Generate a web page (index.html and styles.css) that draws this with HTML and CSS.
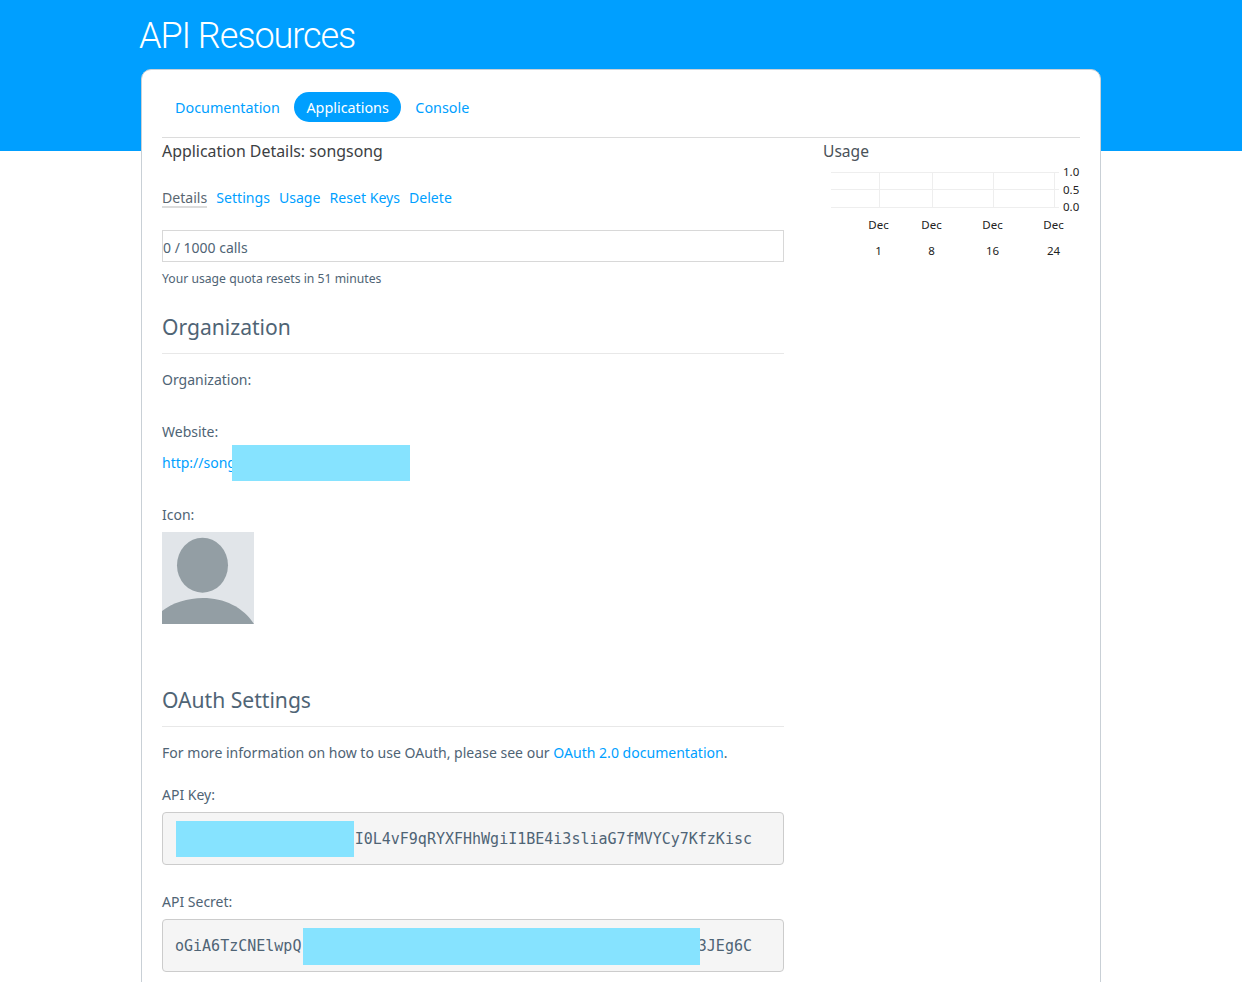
FILE: index.html
```html
<!DOCTYPE html>
<html lang="en">
<head>
<meta charset="utf-8">
<title>API Resources</title>
<link rel="stylesheet" href="styles.css">
</head>
<body>
<div class="page">
  <header class="hero">
    <h1 class="hero-title">API Resources</h1>
  </header>
  <main class="card">
    <nav class="main-nav">
      <a class="main-link" href="#">Documentation</a>
      <a class="main-link active" href="#">Applications</a>
      <a class="main-link" href="#">Console</a>
    </nav>
    <div class="columns">
      <section class="left">
        <h2 class="app-title">Application Details: songsong</h2>
        <nav class="tabs">
          <a class="tab current" href="#">Details</a>
          <a class="tab" href="#">Settings</a>
          <a class="tab" href="#">Usage</a>
          <a class="tab" href="#">Reset Keys</a>
          <a class="tab" href="#">Delete</a>
        </nav>
        <div class="progress">0 / 1000 calls</div>
        <p class="quota">Your usage quota resets in 51 minutes</p>

        <h3 class="section-title org-title">Organization</h3>
        <p class="field-label org-label">Organization:</p>
        <p class="field-label website-label">Website:</p>
        <div class="website-row">
          <a class="link" href="#">http://song</a>
          <span class="redact redact-site"></span>
        </div>
        <p class="field-label icon-label">Icon:</p>
        <svg class="avatar" width="92" height="92" viewBox="0 0 92 92" aria-label="Icon">
          <rect width="92" height="92" fill="#e1e5e9"/>
          <ellipse cx="40.5" cy="33.2" rx="25.5" ry="27.5" fill="#939ea4"/>
          <path d="M0 79 C10 71 26 66 41 66 C62 66 81 75 92 92 L0 92 Z" fill="#939ea4"/>
        </svg>

        <h3 class="section-title oauth-title">OAuth Settings</h3>
        <p class="oauth-note">For more information on how to use OAuth, please see our <a class="link" href="#">OAuth 2.0 documentation</a>.</p>
        <p class="field-label key-label">API Key:</p>
        <div class="code-box code-key">
          <code class="code-text">I0L4vF9qRYXFHhWgiI1BE4i3sliaG7fMVYCy7KfzKisc</code>
          <span class="redact redact-key"></span>
        </div>
        <p class="field-label secret-label">API Secret:</p>
        <div class="code-box code-secret">
          <code class="code-text">oGiA6TzCNElwpQ</code>
          <code class="code-text">3JEg6C</code>
          <span class="redact redact-secret"></span>
        </div>
      </section>
      <aside class="right">
        <h2 class="usage-title">Usage</h2>
        <svg class="chart" width="257" height="110" viewBox="0 0 257 110" aria-label="Usage chart">
          <g stroke="#eeeeee" stroke-width="1" fill="none">
            <path d="M8 8.5H236M8 25.5H236M8 43.5H236"/>
            <path d="M56.5 8V43M109.5 8V43M170.5 8V43M231.5 8V43"/>
          </g>
          <g class="chart-text">
            <text x="240" y="12">1.0</text>
            <text x="240" y="30">0.5</text>
            <text x="240" y="47">0.0</text>
            <text class="mid" x="55.5" y="65">Dec</text>
            <text class="mid" x="108.5" y="65">Dec</text>
            <text class="mid" x="169.5" y="65">Dec</text>
            <text class="mid" x="230.5" y="65">Dec</text>
            <text class="mid" x="55.5" y="91">1</text>
            <text class="mid" x="108.5" y="91">8</text>
            <text class="mid" x="169.5" y="91">16</text>
            <text class="mid" x="230.5" y="91">24</text>
          </g>
        </svg>
      </aside>
    </div>
  </main>
</div>
</body>
</html>
```
FILE: styles.css
```css
* { box-sizing: border-box; }
html, body { margin: 0; padding: 0; background: #fff; }
body { font-family: "Noto Sans", "Open Sans", sans-serif; font-size: 14px; color: #4f6475; }
.page { height: 982px; overflow: hidden; }
p, h1, h2, h3 { margin: 0; font-weight: 400; }
a { text-decoration: none; color: #009fff; }
.link { color: #009fff; }

.hero { height: 151px; background: #009fff; padding: 15px 0 0 139px; }
.hero-title { font-family: Roboto, "Liberation Sans", sans-serif; font-weight: 300; font-size: 36px; line-height: 42px; letter-spacing: -1.05px; color: #fff; }

.card { width: 960px; height: 1100px; margin: -82px 0 0 141px; padding: 0 20px; background: #fff; border: 1px solid #c9d0d6; border-radius: 10px 10px 0 0; position: relative; }

.main-nav { display: flex; gap: 2.5px; height: 68px; padding: 22px 0 0 1px; border-bottom: 1px solid #dcdcdc; font-size: 14.35px; }
.main-link { height: 30px; line-height: 32px; padding: 0 12px; border-radius: 15px; }
.main-link.active { background: #009fff; color: #fff; }

.columns { display: flex; gap: 39px; }
.left { width: 622px; flex: none; }
.right { flex: 1; }

.app-title { font-size: 15.9px; line-height: 26px; color: #3c4043; }
.usage-title { font-size: 15.6px; line-height: 26px; color: #4a5259; }

.tabs { display: flex; gap: 9px; margin-top: 22px; height: 25px; font-size: 14.1px; }
.tab { line-height: 24px; height: 22px; }
.tab.current { color: #5a6670; border-bottom: 2px solid #dcdcdc; }

.progress { margin-top: 19px; height: 32px; line-height: 34px; border: 1px solid #d8d8d8; padding-left: 0; }
.quota { margin-top: 8px; font-size: 12.2px; line-height: 18px; }

.section-title { font-size: 21.1px; line-height: 34px; padding-bottom: 9px; border-bottom: 1px solid #e8e8e8; }
.org-title { margin-top: 22px; }
.oauth-title { margin-top: 59px; }

.field-label { line-height: 20px; padding-top: 1px; height: 21px; margin-bottom: -1px; }
.org-label { margin-top: 15px; }
.website-label { margin-top: 32px; }
.website-row { position: relative; margin-top: 10px; height: 22px; line-height: 24px; }
.icon-label { margin-top: 31px; }
.avatar { display: block; margin-top: 8px; }

.oauth-note { margin-top: 15px; height: 20px; line-height: 22px; font-size: 14.05px; }
.key-label { margin-top: 22px; }
.secret-label { margin-top: 26px; }

.code-box { position: relative; display: flex; justify-content: flex-end; align-items: center; height: 53px; margin-top: 8px; padding: 0 31px 0 12px; background: #f5f5f5; border: 1px solid #cccccc; border-radius: 4px; }
.code-secret { justify-content: space-between; }
.code-text { font-family: "DejaVu Sans Mono", "Liberation Mono", monospace; font-size: 15px; color: #4f6475; }

.redact { position: absolute; background: #86e3ff; }
.redact-site { left: 70px; top: -6px; width: 178px; height: 36px; }
.redact-key { left: 13px; top: 8px; width: 178px; height: 36px; }
.redact-secret { left: 140px; top: 8px; width: 397px; height: 37px; }

.chart { display: block; margin-top: 0; }
.chart-text { font-family: "Noto Sans", sans-serif; font-size: 11.5px; fill: #222; }
.mid { text-anchor: middle; }
```
